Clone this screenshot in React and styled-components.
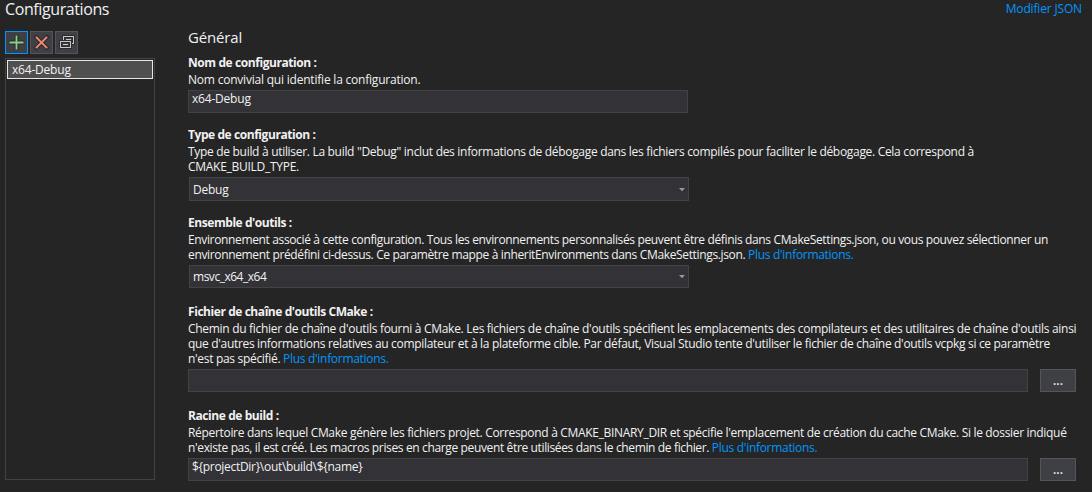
import React from "react";
import styled, { createGlobalStyle } from "styled-components";

const Global = createGlobalStyle`
  * { box-sizing: border-box; }
  body {
    margin: 0;
    background: #252526;
    color: #f1f1f1;
    font-family: "Open Sans", "Noto Sans", sans-serif;
    font-size: 12px;
    line-height: 15px;
    overflow: hidden;
  }
`;

const Page = styled.div`
  width: 1092px;
  height: 492px;
  padding-left: 5px;
  display: flex;
  flex-direction: column;
`;

const Header = styled.header`
  height: 31px;
  padding-right: 10px;
  display: flex;
  justify-content: space-between;
  align-items: flex-start;
`;

const Title = styled.h1`
  margin: 0;
  font-size: 16px;
  font-weight: 400;
  line-height: 19px;
  letter-spacing: -0.4px;
`;

const Link = styled.a`
  color: #0097fb;
  white-space: pre;
  letter-spacing: ${(p) => p.$track ?? -0.3}px;
`;

const HeaderLink = styled(Link)`
  padding-top: 1px;
`;

const Body = styled.div`
  display: flex;
  gap: 33px;
`;

const Sidebar = styled.aside`
  width: 150px;
  display: flex;
  flex-direction: column;
  gap: 4px;
`;

const Toolbar = styled.div`
  display: flex;
  gap: 2px;
`;

const ToolButton = styled.button`
  width: 23px;
  height: 23px;
  padding: 0;
  display: flex;
  align-items: center;
  justify-content: center;
  background: #3f3f46;
  border: 1px solid ${(p) => (p.$active ? "#0097fb" : "#555555")};
`;

const List = styled.div`
  height: 422px;
  padding: 1px;
  border: 1px solid #434346;
`;

const ListItem = styled.div`
  height: 19px;
  padding: 1px 4px;
  background: #4f4f50;
  border: 1px solid #e6e6e6;
  letter-spacing: -0.2px;
`;

const Main = styled.main`
  width: 904px;
  display: flex;
  flex-direction: column;
`;

const SectionTitle = styled.h2`
  margin: 0;
  height: 24px;
  font-size: 15px;
  font-weight: 400;
  line-height: 13px;
  letter-spacing: -0.15px;
`;

const Field = styled.section`
  display: flex;
  flex-direction: column;
  margin-bottom: ${(p) => p.$gap ?? 14}px;
`;

const Label = styled.div`
  height: 17px;
  font-weight: 700;
  letter-spacing: ${(p) => p.$track}px;
`;

const Description = styled.div`
  margin-bottom: 3px;
`;

const Line = styled.div`
  height: 15px;
  white-space: pre;
`;

const Run = styled.span`
  letter-spacing: ${(p) => p.$track}px;
`;

const InputRow = styled.div`
  display: flex;
  gap: 12px;
`;

const Input = styled.div`
  width: ${(p) => p.$width}px;
  height: 23px;
  padding-left: 3px;
  background: #333337;
  border: 1px solid #434346;
  letter-spacing: ${(p) => p.$track ?? -0.3}px;
`;

const Select = styled.div`
  width: 500px;
  height: ${(p) => p.$height}px;
  margin-left: 1px;
  padding: ${(p) => p.$height - 20}px 3px 0 3px;
  display: flex;
  justify-content: space-between;
  background: #333337;
  border: 1px solid #434346;
  letter-spacing: ${(p) => p.$track}px;
`;

const Caret = styled.svg`
  margin-top: 6px;
`;

const BrowseButton = styled.button`
  width: 36px;
  height: 23px;
  padding: 0;
  background: #3f3f46;
  border: 1px solid #555555;
  color: #f1f1f1;
  font: 600 12px/15px "Open Sans", sans-serif;
`;

const PlusIcon = () => (
  <svg width="17" height="17" viewBox="0 0 17 17">
    <path d="M8.5 1v15M1 8.5h15" stroke="#2b2b2c" strokeWidth="4" />
    <path d="M8.5 1.5v14M1.5 8.5h14" stroke="#89d185" strokeWidth="1.8" />
  </svg>
);

const CrossIcon = () => (
  <svg width="17" height="17" viewBox="0 0 17 17">
    <path d="M3.3 3.3l10.4 10.4M13.7 3.3L3.3 13.7" stroke="#2b2b2c" strokeWidth="4" strokeLinecap="square" />
    <path d="M2.9 2.9l11.2 11.2M14.1 2.9L2.9 14.1" stroke="#f48771" strokeWidth="2" />
  </svg>
);

const CloneIcon = () => (
  <svg width="17" height="17" viewBox="0 0 17 17" fill="none" shapeRendering="crispEdges">
    <path d="M5.5 6V2.5h10v7H12M2.5 7.5h10v6h-10z" stroke="#2b2b2c" strokeWidth="3" />
    <path d="M5.5 6V2.5h10v7H14M8 5.5h5" stroke="#c8c8c8" />
    <path d="M2.5 7.5h10v6h-10zM5 10.5h5" stroke="#c8c8c8" />
  </svg>
);

const Chevron = () => (
  <Caret width="6" height="4" viewBox="0 0 6 4">
    <path d="M0 0h6L3 3.2z" fill="#999999" />
  </Caret>
);

const MoreInfo = () => <Link>Plus d'informations.</Link>;

export default function App() {
  return (
    <>
      <Global />
      <Page>
        <Header>
          <Title>Configurations</Title>
          <HeaderLink $track={-0.16}>Modifier JSON</HeaderLink>
        </Header>
        <Body>
          <Sidebar>
            <Toolbar>
              <ToolButton $active aria-label="Ajouter"><PlusIcon /></ToolButton>
              <ToolButton aria-label="Supprimer"><CrossIcon /></ToolButton>
              <ToolButton aria-label="Cloner"><CloneIcon /></ToolButton>
            </Toolbar>
            <List>
              <ListItem>x64-Debug</ListItem>
            </List>
          </Sidebar>
          <Main>
            <SectionTitle>Général</SectionTitle>

            <Field>
              <Label $track={-0.42}>Nom de configuration :</Label>
              <Description>
                <Line><Run $track={-0.21}>Nom convivial qui identifie la configuration.</Run></Line>
              </Description>
              <Input $width={500} $track={-0.2}>x64-Debug</Input>
            </Field>

            <Field>
              <Label $track={-0.43}>Type de configuration :</Label>
              <Description>
                <Line><Run $track={-0.305}>Type de build à utiliser. La build "Debug" inclut des informations de débogage dans les fichiers compilés pour faciliter le débogage. Cela correspond à</Run></Line>
                <Line><Run $track={-0.28}>CMAKE_BUILD_TYPE.</Run></Line>
              </Description>
              <Select $height={24} $track={-0.24}>Debug<Chevron /></Select>
            </Field>

            <Field $gap={16}>
              <Label $track={-0.44}>Ensemble d'outils :</Label>
              <Description>
                <Line><Run $track={-0.358}>Environnement associé à cette configuration. Tous les environnements personnalisés peuvent être définis dans CMakeSettings.json, ou vous pouvez sélectionner un</Run></Line>
                <Line><Run $track={-0.351}>environnement prédéfini ci-dessus. Ce paramètre mappe à inheritEnvironments dans CMakeSettings.json. </Run><MoreInfo /></Line>
              </Description>
              <Select $height={23} $track={-0.48}>msvc_x64_x64<Chevron /></Select>
            </Field>

            <Field $gap={16}>
              <Label $track={-0.435}>Fichier de chaîne d'outils CMake :</Label>
              <Description>
                <Line><Run $track={-0.3}>Chemin du fichier de chaîne d'outils fourni à CMake. Les fichiers de chaîne d'outils spécifient les emplacements des compilateurs et des utilitaires de chaîne d'outils ainsi</Run></Line>
                <Line><Run $track={-0.323}>que d'autres informations relatives au compilateur et à la plateforme cible. Par défaut, Visual Studio tente d'utiliser le fichier de chaîne d'outils vcpkg si ce paramètre</Run></Line>
                <Line><Run $track={-0.316}>n'est pas spécifié. </Run><MoreInfo /></Line>
              </Description>
              <InputRow>
                <Input $width={840} />
                <BrowseButton>...</BrowseButton>
              </InputRow>
            </Field>

            <Field $gap={0}>
              <Label $track={-0.42}>Racine de build :</Label>
              <Description>
                <Line><Run $track={-0.318}>Répertoire dans lequel CMake génère les fichiers projet. Correspond à CMAKE_BINARY_DIR et spécifie l'emplacement de création du cache CMake. Si le dossier indiqué</Run></Line>
                <Line><Run $track={-0.361}>n'existe pas, il est créé. Les macros prises en charge peuvent être utilisées dans le chemin de fichier. </Run><MoreInfo /></Line>
              </Description>
              <InputRow>
                <Input $width={840}>{"${projectDir}\\out\\build\\${name}"}</Input>
                <BrowseButton>...</BrowseButton>
              </InputRow>
            </Field>
          </Main>
        </Body>
      </Page>
    </>
  );
}
